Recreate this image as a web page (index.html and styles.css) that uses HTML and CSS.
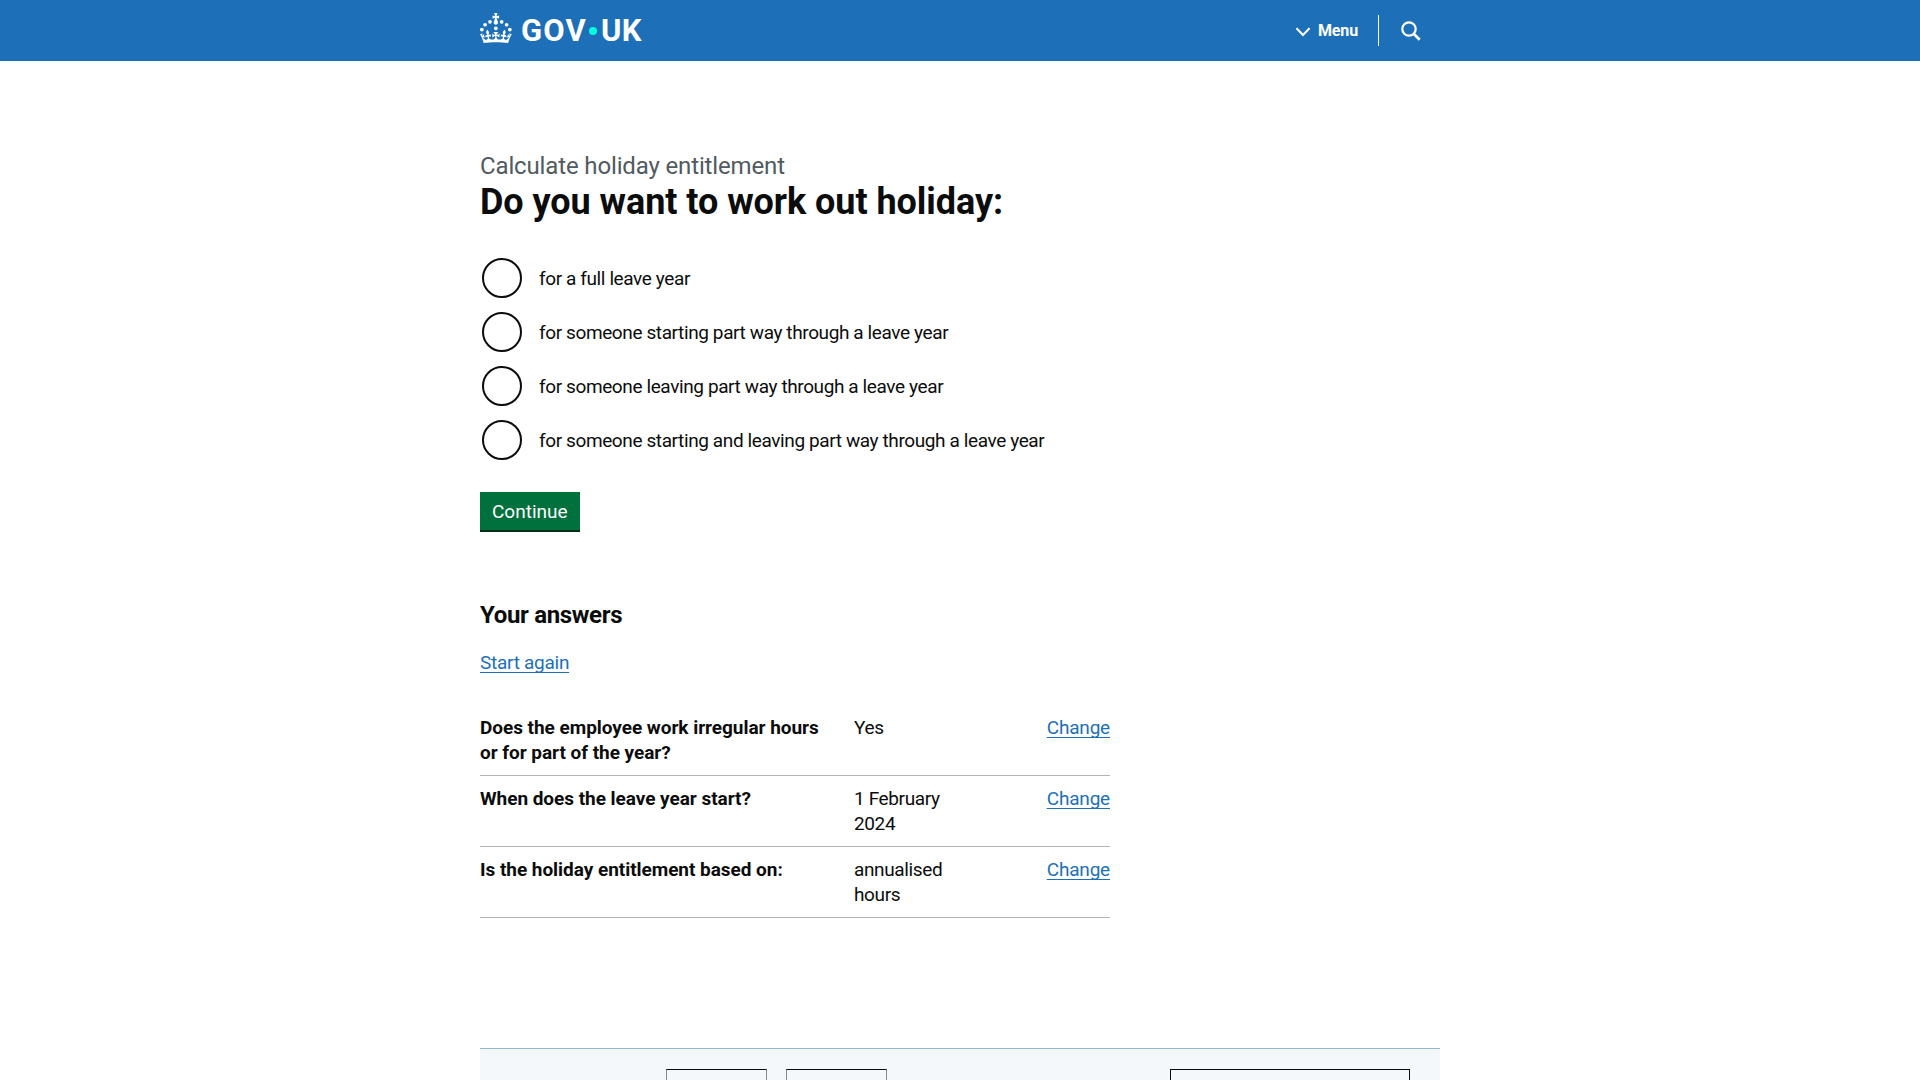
FILE: index.html
```html
<!DOCTYPE html>
<html lang="en">
<head>
<meta charset="utf-8">
<title>Do you want to work out holiday: - Calculate holiday entitlement - GOV.UK</title>
<link rel="stylesheet" href="styles.css">
</head>
<body>
<header class="header">
  <div class="header-inner">
    <a class="logo" href="#" aria-label="GOV.UK">
      <svg class="crown" viewBox="0 0 64 60" width="32" height="30" fill="currentColor" aria-hidden="true">
        <circle cx="20" cy="17.6" r="3.7"/><circle cx="10.2" cy="23.5" r="3.7"/><circle cx="3.7" cy="33.2" r="3.7"/><circle cx="31.7" cy="30.6" r="3.7"/><circle cx="43.3" cy="17.6" r="3.7"/><circle cx="53.2" cy="23.5" r="3.7"/><circle cx="59.7" cy="33.2" r="3.7"/>
        <path d="M33.1,9.8c.2-.1.3-.3.5-.5l4.6,2.4v-6.8l-4.6,1.5c-.1-.2-.3-.3-.5-.5l1.9-5.9h-6.7l1.9,5.9c-.2.1-.3.3-.5.5l-4.6-1.5v6.8l4.6-2.4c.1.2.3.3.5.5l-2.6,8c-.9,2.8,1.2,5.7,4.1,5.7h0c3,0,5.1-2.9,4.1-5.7l-2.6-8ZM37,37.9s-3.4,3.8-4.1,6.1c2.2,0,4.2-.5,6.4-2.8l-.7,8.5c-2-2.8-4.4-4.1-5.7-3.8.1,3.1.5,6.7,5.8,7.2,3.7.3,6.7-1.5,7-3.8.4-2.6-2-4.3-3.7-1.6-1.4-4.5,2.4-6.1,4.9-3.2-1.9-4.5-1.8-7.7,2.4-10.9,3,4,2.6,7.3-1.2,11.1,2.4-1.3,6.2,0,4,4.6-1.2-2.8-3.7-2.2-4.2.2-.3,1.7.7,3.7,3,4.2,1.9.3,4.7-.9,7-5.9-1.3,0-2.4.7-3.9,1.7l2.4-8c.6,2.3,1.4,3.7,2.2,4.5.6-1.6.5-2.8,0-5.3l5,1.8c-2.6,3.6-5.2,8.7-7.3,17.5-7.4-1.1-15.7-1.7-24.5-1.7h0c-8.8,0-17.1.6-24.5,1.7-2.1-8.9-4.7-13.9-7.3-17.5l5-1.8c-.5,2.5-.6,3.7,0,5.3.8-.8,1.6-2.3,2.2-4.5l2.4,8c-1.5-1-2.6-1.7-3.9-1.7,2.3,5,5.2,6.2,7,5.9,2.3-.4,3.3-2.4,3-4.2-.5-2.4-3-3.1-4.2-.2-2.2-4.6,1.6-6,4-4.6-3.7-3.7-4.2-7.1-1.2-11.1,4.2,3.2,4.3,6.4,2.4,10.9,2.5-2.8,6.3-1.3,4.9,3.2-1.8-2.7-4.1-1-3.7,1.6.3,2.3,3.3,4.1,7,3.8,5.4-.5,5.7-4.2,5.8-7.2-1.3-.2-3.7,1-5.7,3.8l-.7-8.5c2.2,2.3,4.2,2.7,6.4,2.8-.7-2.3-4.1-6.1-4.1-6.1h10.6,0Z"/>
      </svg>
      <span class="gov">GOV</span><span class="dot"></span><span class="uk">UK</span>
    </a>
    <nav class="nav">
      <button class="menu" type="button">
        <svg width="14" height="10" viewBox="0 0 14 10" fill="none" stroke="currentColor" stroke-width="2.1" aria-hidden="true"><path d="M.4 1.2 7 8l6.6-6.8"/></svg>
        <span>Menu</span>
      </button>
      <button class="search" type="button" aria-label="Search GOV.UK">
        <svg width="20" height="20" viewBox="0 0 20 20" fill="none" stroke="currentColor" stroke-width="2.2" aria-hidden="true"><circle cx="8" cy="8" r="6.7"/><path d="m12.7 12.7 6 6" stroke-width="2.7"/></svg>
      </button>
    </nav>
  </div>
</header>

<div class="container">
  <main class="main">
    <form>
      <h1 class="title"><span class="caption">Calculate holiday entitlement</span>Do you want to work out holiday:</h1>
      <div class="radios">
        <label class="radio"><input type="radio" name="response"><span>for a full leave year</span></label>
        <label class="radio"><input type="radio" name="response"><span>for someone starting part way through a leave year</span></label>
        <label class="radio"><input type="radio" name="response"><span>for someone leaving part way through a leave year</span></label>
        <label class="radio"><input type="radio" name="response"><span>for someone starting and leaving part way through a leave year</span></label>
      </div>
      <button class="continue" type="button">Continue</button>
    </form>
    <section class="answers">
      <h2 class="subtitle">Your answers</h2>
      <p class="restart"><a class="link" href="#">Start again</a></p>
      <dl class="summary">
        <div class="row"><dt>Does the employee work irregular hours or for part of the year?</dt><dd class="value">Yes</dd><dd class="action"><a class="link" href="#">Change</a></dd></div>
        <div class="row"><dt>When does the leave year start?</dt><dd class="value">1 February 2024</dd><dd class="action"><a class="link" href="#">Change</a></dd></div>
        <div class="row"><dt>Is the holiday entitlement based on:</dt><dd class="value">annualised hours</dd><dd class="action"><a class="link" href="#">Change</a></dd></div>
      </dl>
    </section>
  </main>
  <aside class="feedback">
    <div class="feedback-options"><span class="box"></span><span class="box"></span></div>
    <span class="box box-wide"></span>
  </aside>
</div>
</body>
</html>
```
FILE: styles.css
```css
* { box-sizing: border-box; }

body {
  margin: 0;
  background: #fff;
  color: #0b0c0c;
  font: 19px/25px Roboto, "Liberation Sans", sans-serif;
}

button { font: inherit; color: inherit; background: none; border: 0; padding: 0; }

.header { height: 61px; background: #1d70b8; color: #fff; }
.header-inner {
  display: flex;
  justify-content: space-between;
  width: 960px;
  height: 61px;
  margin: 0 auto;
}
.logo {
  display: flex;
  align-items: center;
  color: #fff;
  font-size: 31px;
  font-weight: 700;
  line-height: 30px;
  text-decoration: none;
}
.crown { display: block; margin: 0 9px 5px 0; }
.gov, .uk { padding-top: 1px; }
.gov { width: 68px; letter-spacing: 1.2px; }
.dot { width: 8px; height: 8px; margin-right: 4px; border-radius: 50%; background: #00ffe0; }
.uk { letter-spacing: .4px; }

.nav { display: flex; align-items: center; padding-right: 19px; }
.menu {
  display: flex;
  align-items: center;
  gap: 8px;
  height: 31px;
  padding-right: 20px;
  border-right: 1px solid #fff;
  font-size: 16px;
  font-weight: 700;
  line-height: 20px;
  letter-spacing: -.15px;
}
.menu svg { margin-top: 2px; }
.search { display: flex; padding-left: 22px; }

.container { width: 960px; margin: 0 auto; }
.main { width: 630px; height: 987px; padding-top: 90px; }

.title { margin: 0; font-size: 36px; line-height: 40px; letter-spacing: -.05px; }
.caption {
  display: block;
  margin-bottom: 1px;
  color: #505a5f;
  font-size: 24px;
  font-weight: 400;
  line-height: 30px;
  letter-spacing: -.14px;
}

.radios { display: grid; gap: 10px; margin-top: 34px; }
.radio {
  display: flex;
  align-items: center;
  gap: 17px;
  height: 44px;
  padding-left: 2px;
  letter-spacing: -.39px;
}
.radio input {
  appearance: none;
  width: 40px;
  height: 40px;
  margin: 0;
  border: 2px solid #0b0c0c;
  border-radius: 50%;
}

.continue {
  display: block;
  height: 38px;
  margin-top: 30px;
  padding: 1px 12px 0;
  background: #00703c;
  box-shadow: 0 2px 0 #002d18;
  color: #fff;
  line-height: 19px;
}

.answers { margin-top: 70px; }
.subtitle { margin: 0; font-size: 24px; line-height: 30px; letter-spacing: -.33px; }
.restart { margin: 20px 0 30px; letter-spacing: -.27px; }
.link {
  color: #1d70b8;
  text-decoration: underline;
  text-decoration-thickness: 1px;
  text-underline-offset: 3px;
  text-decoration-skip-ink: none;
}

.summary { margin: 0; }
.row {
  display: grid;
  grid-template-columns: 354px 106px 1fr;
  column-gap: 20px;
  padding: 10px 0;
  border-bottom: 1px solid #b1b4b6;
}
.row dt { font-weight: 700; letter-spacing: -.04px; }
.row dd { margin: 0; }
.value { letter-spacing: -.37px; }
.action { text-align: right; letter-spacing: -.2px; }

.feedback {
  display: flex;
  justify-content: space-between;
  height: 32px;
  padding: 20px 30px 0 186px;
  border-top: 1px solid #8eb8dc;
  background: #f4f8fb;
}
.feedback-options { display: flex; gap: 19px; }
.box { width: 101px; height: 11px; border: 1px solid #0b0c0c; border-bottom: 0; }
.feedback-options .box { border-color: #0b0c0c #85888a; }
.box-wide { width: 240px; }
```
